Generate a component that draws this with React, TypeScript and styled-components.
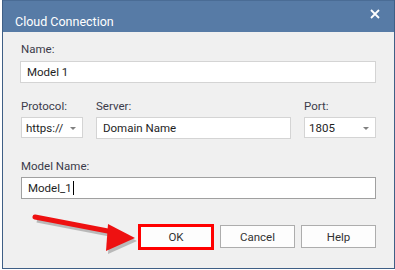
import React from "react";
import styled, { createGlobalStyle } from "styled-components";

const Global = createGlobalStyle`
  html, body { margin: 0; padding: 0; background: #ffffff; }
  body { font-family: Roboto, "Liberation Sans", sans-serif; }
`;

const Page = styled.div`
  position: relative;
  width: 395px;
  height: 270px;
`;

const Window = styled.div`
  margin-left: 2px;
  width: 391px;
  height: 268px;
  border: 1px solid #3f5f86;
  border-top: none;
  background: #f0f0f0;
  display: flex;
  flex-direction: column;
`;

const TitleBar = styled.div`
  height: 32px;
  flex: none;
  background: #577ba6;
  border-top: 1px solid #4a6c95;
  box-sizing: border-box;
  display: flex;
  align-items: center;
  justify-content: space-between;
  padding: 1px 12px 0 12px;
`;

const Title = styled.span`
  color: #ffffff;
  font-size: 12.5px;
  margin-top: 8px;
`;

const Close = styled.svg`
  width: 10px;
  height: 10px;
  margin-top: -7px;
  margin-right: 2px;
`;

const Body = styled.div`
  flex: 1;
  display: flex;
  flex-direction: column;
  padding: 8px 18px 0 18px;
`;

const Label = styled.div`
  font-size: 11.5px;
  line-height: 16px;
  color: #3b3b4a;
  height: 16px;
`;

const Field = styled.div<{ $dark?: boolean }>`
  box-sizing: border-box;
  height: 22px;
  background: #ffffff;
  border: 1px solid ${(p) => (p.$dark ? "#a0a0a0" : "#d4d4d4")};
  display: flex;
  align-items: center;
  padding: 0 6px;
  font-size: 11.5px;
  color: #1e1e1e;
`;

const Select = styled(Field)`
  height: 21px;
  justify-content: space-between;
  padding: 0 6px 0 4px;
`;

const Caret = styled.span`
  width: 0;
  height: 0;
  border-left: 3px solid transparent;
  border-right: 3px solid transparent;
  border-top: 3px solid #808080;
  margin-top: 1px;
`;

const Group = styled.div<{ $mt: number; $gap: number }>`
  margin-top: ${(p) => p.$mt}px;
  display: flex;
  flex-direction: column;
  gap: ${(p) => p.$gap}px;
`;

const Row = styled.div`
  margin-top: 15px;
  display: grid;
  grid-template-columns: 62px 195px 72px;
  column-gap: 13px;
`;

const Col = styled.div`
  display: flex;
  flex-direction: column;
  gap: 3px;
`;

const Cursor = styled.span`
  display: inline-block;
  width: 1px;
  height: 14px;
  background: #000;
  margin-left: 1px;
`;

const Buttons = styled.div`
  margin-top: 26px;
  display: flex;
  justify-content: flex-end;
  gap: 6px;
`;

const Button = styled.div<{ $hl?: boolean }>`
  box-sizing: border-box;
  width: ${(p) => (p.$hl ? "76px" : "75px")};
  height: ${(p) => (p.$hl ? "26px" : "23px")};
  margin-top: ${(p) => (p.$hl ? "-1px" : "0")};
  background: #fdfdfd;
  border: ${(p) => (p.$hl ? "3px solid #ff0000" : "1px solid #adadad")};
  display: flex;
  align-items: center;
  justify-content: center;
  font-size: 11.5px;
  color: #333;
`;

const Arrow = styled.svg`
  position: absolute;
  left: 0;
  top: 0;
  width: 395px;
  height: 270px;
  pointer-events: none;
`;

export default function App() {
  return (
    <Page>
      <Global />
      <Window>
        <TitleBar>
          <Title>Cloud Connection</Title>
          <Close viewBox="0 0 10 10">
            <path d="M1 1 L9 9 M9 1 L1 9" stroke="#fff" strokeWidth="1.8" />
          </Close>
        </TitleBar>
        <Body>
          <Group $mt={1} $gap={4}>
            <Label>Name:</Label>
            <Field style={{ marginLeft: -1 }}>Model 1</Field>
          </Group>
          <Row>
            <Col>
              <Label>Protocol:</Label>
              <Select>
                https://
                <Caret />
              </Select>
            </Col>
            <Col>
              <Label>Server:</Label>
              <Field>Domain Name</Field>
            </Col>
            <Col>
              <Label>Port:</Label>
              <Select>
                1805
                <Caret />
              </Select>
            </Col>
          </Row>
          <Group $mt={19} $gap={3}>
            <Label>Model Name:</Label>
            <Field $dark>
              Model_1
              <Cursor />
            </Field>
          </Group>
          <Buttons>
            <Button $hl>OK</Button>
            <Button>Cancel</Button>
            <Button>Help</Button>
          </Buttons>
        </Body>
      </Window>
      <Arrow viewBox="0 0 395 270">
        <g transform="translate(2,3)" opacity="0.35">
          <path d="M35 217 L113 232" stroke="#555" strokeWidth="5" />
          <path d="M108 224 L135 238 L106 251 Z" fill="#555" />
        </g>
        <path d="M35 217 L113 232" stroke="#ee1111" strokeWidth="5" strokeLinecap="round" />
        <path d="M108 224 L135 238 L106 251 Z" fill="#ee1111" />
      </Arrow>
    </Page>
  );
}
